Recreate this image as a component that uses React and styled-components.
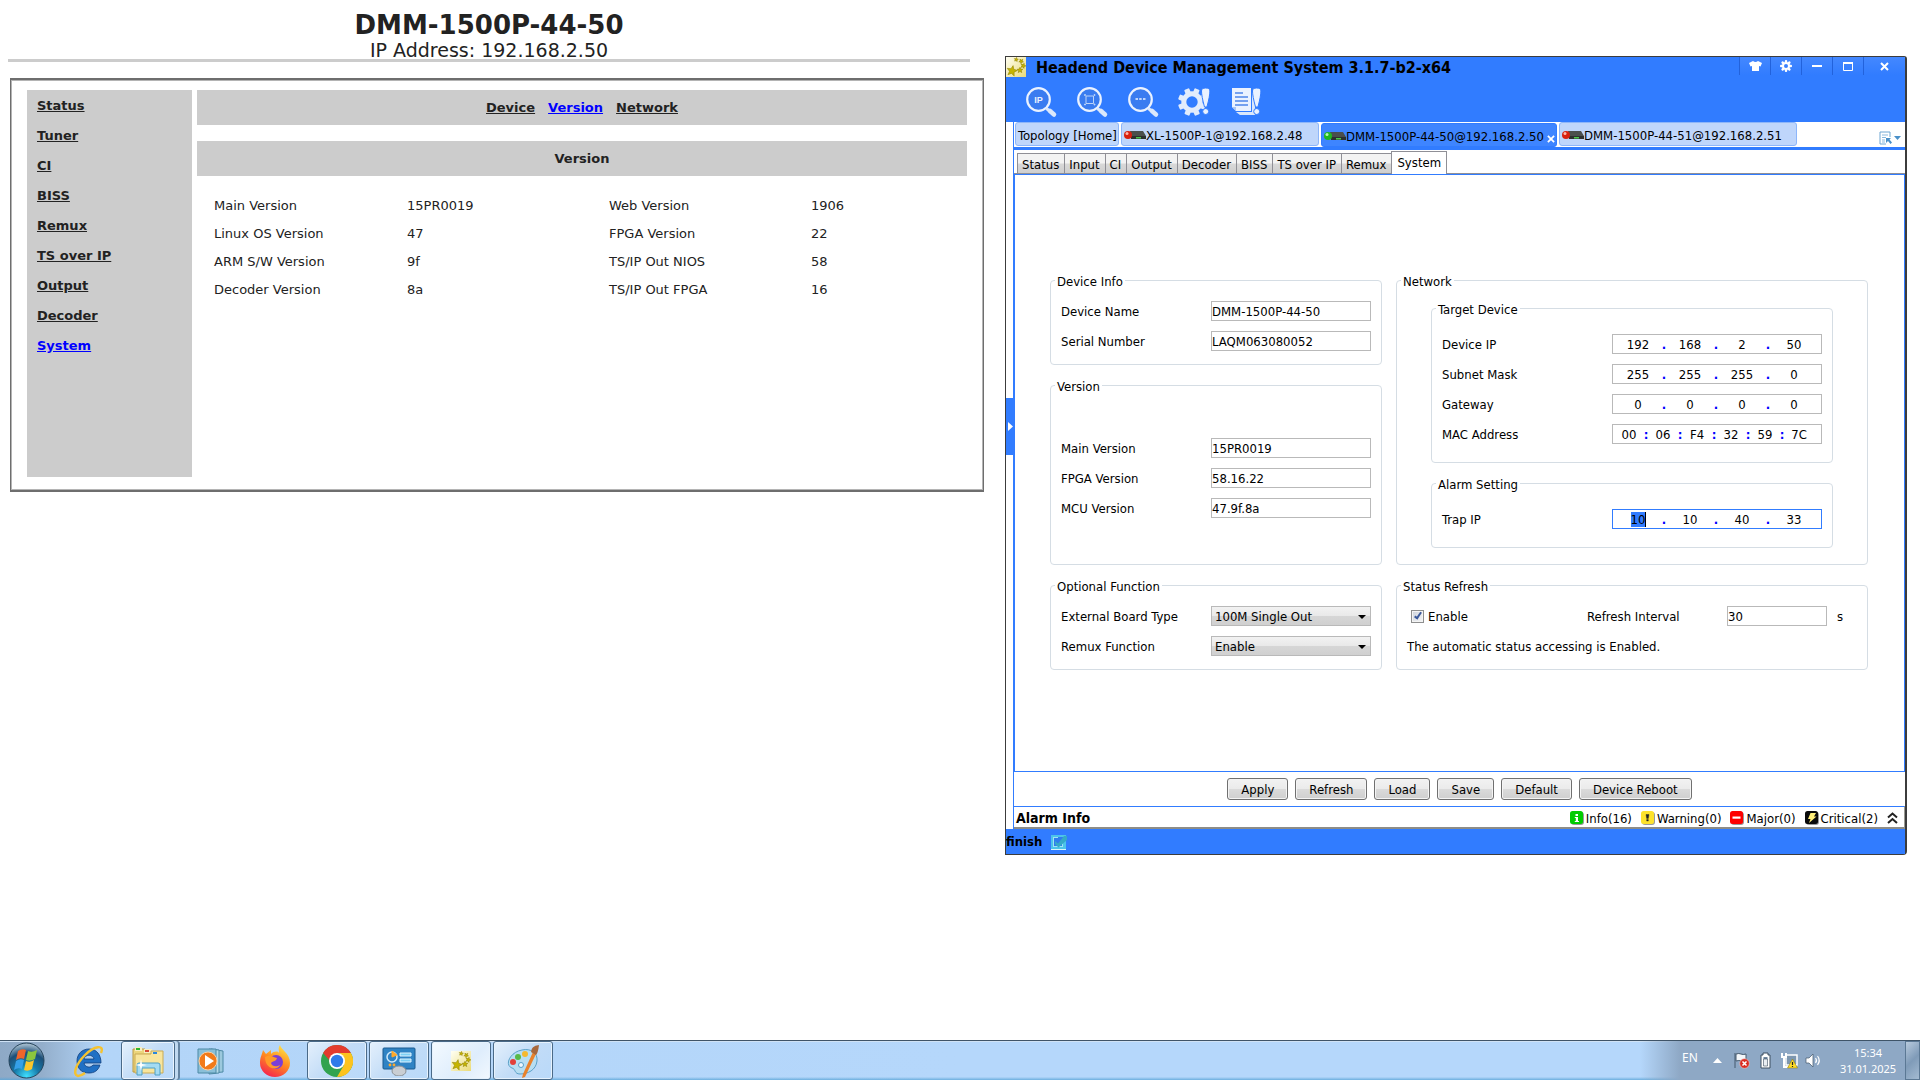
import React from "react";
import styled, { createGlobalStyle, css } from "styled-components";

const BLUE = "#317cff";
const UI = '"DejaVu Sans Condensed", "DejaVu Sans", sans-serif';

const Global = createGlobalStyle`
  *, *::before, *::after { box-sizing: border-box; }
  body { margin: 0; background: #fff; color: #000; }
  button, input, select { font: inherit; color: inherit; margin: 0; }
  button { cursor: pointer; }
  svg { display: block; flex: none; }
`;

const Desktop = styled.div`
  display: flex;
  flex-direction: column;
  min-height: 100vh;
  background: #fff;
`;

const Workspace = styled.main`
  flex: 1;
  display: grid;
  grid-template-columns: minmax(0, 1005fr) minmax(0, 902fr) minmax(0, 13fr);
  align-items: start;
`;

/* ---------- Device web page ---------- */

const WebPage = styled.section`
  font: 13px/18px "DejaVu Sans", Verdana, sans-serif;
  color: #222;
`;

const PageHeader = styled.header`
  margin: 0 35px 16px 8px;
  padding-top: 9px;
  border-bottom: 3px solid #ccc;
  text-align: center;
`;

const PageTitle = styled.h1`
  margin: 0;
  font-size: 26px;
  line-height: 32px;
`;

const PageAddress = styled.p`
  margin: 0;
  font-size: 19px;
  line-height: 18px;
`;

const PageFrame = styled.div`
  display: flex;
  gap: 5px;
  margin: 0 21px 0 10px;
  padding: 10px 16px 13px;
  border: 1px solid #6e6e6e;
  box-shadow: inset 0 0 0 1px #b4b4b4;
  border-bottom-width: 2px;
  border-top-width: 2px;
`;

const SideNav = styled.nav`
  display: flex;
  flex-direction: column;
  width: 165px;
  min-height: 387px;
  padding: 1px 10px;
  background: #ccc;
`;

const PageLink = styled.a`
  font-weight: bold;
  line-height: 30px;
  text-decoration: underline;
  color: ${(p) => (p.$current ? "#00f" : "#222")};
`;

const PageBody = styled.div`
  flex: 1;
  min-width: 0;
  display: flex;
  flex-direction: column;
  gap: 16px;
`;

const PageBar = styled.div`
  display: flex;
  align-items: center;
  justify-content: center;
  gap: 13px;
  height: 35px;
  background: #ccc;
`;

const BarHeading = styled.h2`
  margin: 0;
  font-size: 13px;
`;

const VersionTable = styled.table`
  width: 100%;
  table-layout: fixed;
  border-collapse: collapse;
  th, td {
    height: 28px;
    padding: 0 0 0 17px;
    text-align: left;
    font-weight: normal;
  }
  th:first-child { width: 193px; }
  th, td { width: 202px; }
  td:last-child { width: auto; }
`;

/* ---------- Management window ---------- */

const AppWindow = styled.section`
  margin-top: 56px;
  border: 1px solid #3c3c3c;
  border-right-width: 2px;
  border-radius: 0 3px 4px 0;
  background: #fff;
  font: 13px/17px ${UI};
`;

const WindowTop = styled.header`
  background: ${BLUE};
  height: 65px;
`;

const TitleBar = styled.div`
  display: flex;
  align-items: flex-start;
`;

const TitleText = styled.h2`
  flex: 1;
  margin: 0;
  padding-left: 10px;
  font-size: 16px;
  line-height: 22px;
  white-space: nowrap;
`;

const WindowButton = styled.button`
  display: flex;
  align-items: center;
  justify-content: center;
  width: ${(p) => (p.$wide ? "42px" : "31px")};
  height: 18px;
  padding: 0;
  border: 0;
  border-left: 1px solid #2262dc;
  background: linear-gradient(#4488ff, ${BLUE});
`;

const Toolbar = styled.div`
  display: flex;
  gap: 17px;
  padding: 6px 18px;
`;

const ToolButton = styled.button`
  width: 34px;
  height: 34px;
  padding: 0;
  border: 0;
  background: none;
`;

const DeviceTabs = styled.div`
  display: flex;
  align-items: flex-end;
  gap: 2px;
  height: 28px;
  margin-left: 7px;
  padding: 0 4px 0 1px;
  border-bottom: 3px solid ${BLUE};
  border-left: 1px solid ${BLUE};
`;

const DeviceTab = styled.button`
  display: flex;
  align-items: center;
  height: 24px;
  width: ${(p) => p.$w};
  margin-bottom: ${(p) => (p.$active ? 0 : "1px")};
  padding: 2px 1px 0 2px;
  border: 1px solid ${(p) => (p.$active ? BLUE : "#8db6fa")};
  border-radius: 3px;
  background: ${(p) => (p.$active ? "#3e85ff" : "#bfd6fb")};
  text-align: left;
  white-space: nowrap;
`;

const TabClose = styled.span`
  margin-left: auto;
  padding-top: 6px;
`;

const TabMenu = styled.button`
  margin: 0 0 2px auto;
  padding: 0;
  border: 0;
  background: none;
`;

const WindowBody = styled.div`
  display: flex;
`;

const Gutter = styled.div`
  display: flex;
  flex-direction: column;
  width: 7px;
  padding-top: 248px;
`;

const Expander = styled.button`
  display: flex;
  align-items: center;
  justify-content: flex-end;
  height: 57px;
  padding: 0;
  border: 0;
  background: ${BLUE};
`;

const WorkArea = styled.div`
  flex: 1;
  min-width: 0;
  border-left: 1px solid ${BLUE};
`;

const SubTabs = styled.div`
  display: flex;
  align-items: flex-end;
  height: 24px;
  padding-left: 3px;
  border-bottom: 1px solid #8f8f96;
`;

const SubTab = styled.button`
  height: ${(p) => (p.$active ? "23px" : "20px")};
  margin-bottom: ${(p) => (p.$active ? "-1px" : 0)};
  padding: ${(p) => (p.$active ? "0 5px 2px" : "2px 5px 0 4px")};
  border: 1px solid #8f8f96;
  border-right-width: ${(p) => (p.$last ? 0 : "1px")};
  border-left-width: ${(p) => (p.$active || p.$first ? "1px" : 0)};
  border-bottom: 0;
  background: ${(p) => (p.$active ? "#fff" : "linear-gradient(#f3f3f3 45%, #d8d8d8 55%, #cfcfcf)")};
  white-space: nowrap;
`;

const Panel = styled.div`
  display: flex;
  flex-direction: column;
  justify-content: center;
  min-height: 598px;
  padding: 0 36px 0 35px;
  border: 1px solid ${BLUE};
`;

const Groups = styled.form`
  display: grid;
  grid-template-columns: minmax(0, 332fr) minmax(0, 472fr);
  column-gap: 14px;
  row-gap: 12px;
  padding-bottom: 4px;
`;

const Column = styled.div`
  display: flex;
  flex-direction: column;
  gap: 12px;
`;

const Group = styled.fieldset`
  display: flex;
  flex-direction: column;
  gap: ${(p) => p.$gap || "10px"};
  min-width: 0;
  margin: 0;
  padding: ${(p) => p.$pad || "12px 10px 13px"};
  border: 1px solid #d5dde4;
  border-radius: 4px;
  legend {
    margin-left: ${(p) => (p.$nudge ? p.$nudge : "-6px")};
    padding: 0 2px;
    height: 17px;
    line-height: 19px;
  }
`;

const Row = styled.div`
  display: flex;
  align-items: center;
  height: 20px;
  white-space: nowrap;
`;

const RowLabel = styled.label`
  flex: 1;
`;

const boxed = css`
  height: 20px;
  border: 1px solid #b9b9b9;
  border-radius: 0;
  outline: 0;
  background: #fff;
`;

const TextBox = styled.input`
  ${boxed}
  width: ${(p) => p.$w || "160px"};
  padding: 0;
`;

const SelectBox = styled.span`
  position: relative;
  &::after {
    content: "";
    position: absolute;
    right: 5px;
    top: 9px;
    border: 4px solid transparent;
    border-top-color: #000;
    border-bottom: 0;
  }
`;

const Select = styled.select`
  ${boxed}
  display: block;
  appearance: none;
  width: 160px;
  padding: 0 0 0 3px;
  background: linear-gradient(#f2f2f2, #e9e9e9 48%, #d6d6d6 52%, #d0d0d0);
`;

const Octets = styled.div`
  ${boxed}
  display: flex;
  align-items: center;
  width: 210px;
  padding-left: 4px;
  border-color: ${(p) => (p.$focused ? BLUE : "#b9b9b9")};
`;

const Octet = styled.input`
  width: ${(p) => p.$w};
  height: 15px;
  padding: 0;
  border: 0;
  outline: 0;
  background: ${(p) => (p.$selected ? `linear-gradient(90deg, ${BLUE} 14px, #000 14px) center / 15px 15px no-repeat` : "transparent")};
  text-align: center;
`;

const Separator = styled.span`
  width: 10px;
  color: #00f;
  font-weight: bold;
  text-align: center;
`;

const CheckLabel = styled.label`
  display: flex;
  align-items: center;
  gap: 4px;
  width: 180px;
  padding-left: 4px;
`;

const CheckBox = styled.input`
  appearance: none;
  display: grid;
  place-items: center;
  width: 13px;
  height: 13px;
  border: 1px solid #8e8f8f;
  background: linear-gradient(135deg, #cdd3dc, #f6f6f6);
  box-shadow: inset 0 0 0 1px #f4f4f4;
  &:checked::after {
    content: "";
    width: 4px;
    height: 8px;
    margin-bottom: 2px;
    border: solid #3c5a9c;
    border-width: 0 2px 2px 0;
    rotate: 35deg;
  }
`;

const IntervalLabel = styled.label`
  width: 140px;
`;

const Unit = styled.span`
  margin-left: 10px;
`;

const Actions = styled.div`
  display: flex;
  justify-content: center;
  gap: 7px;
  padding: 6px 0;
`;

const ActionButton = styled.button`
  height: 22px;
  padding: 0 13px;
  border: 1px solid #707070;
  border-radius: 3px;
  background: linear-gradient(#f2f2f2, #ebebeb 48%, #dadada 52%, #cfcfcf);
  box-shadow: inset 0 0 0 1px #f4f4f4;
  white-space: nowrap;
`;

const AlarmBar = styled.div`
  display: flex;
  align-items: center;
  gap: 9px;
  height: 23px;
  padding: 2px 6px 0 2px;
  border-top: 1px solid ${BLUE};
  border-bottom: 2px solid #8c8c88;
  border-right: 1px solid #9a9a94;
`;

const AlarmTitle = styled.strong`
  flex: 1;
  font-size: 14px;
`;

const AlarmItem = styled.span`
  display: flex;
  align-items: center;
  gap: 2px;
`;

const ExpandAlarms = styled.button`
  padding: 0;
  border: 0;
  background: none;
`;

const StatusBar = styled.footer`
  display: flex;
  align-items: center;
  gap: 9px;
  height: 25px;
  background: ${BLUE};
  font-size: 13px;
  font-weight: bold;
`;

/* ---------- Taskbar ---------- */

const Taskbar = styled.footer`
  display: flex;
  align-items: stretch;
  height: 40px;
  border-top: 1px solid #3f5468;
  background:
    linear-gradient(transparent 92%, rgba(90, 165, 215, 0.8)),
    linear-gradient(90deg, #8ea9c6, #93aecb 42px, #b3d5f8 100px, #b5d7fb 50%, #b5d7fb);
  box-shadow: inset 0 1px 0 #cfe2f5;
`;

const StartButton = styled.button`
  width: 54px;
  padding: 0 0 0 8px;
  border: 0;
  background: none;
`;

const TaskButton = styled.button`
  display: flex;
  align-items: center;
  justify-content: center;
  width: ${(p) => p.$w || "60px"};
  padding: 0;
  margin-right: ${(p) => p.$after || "2px"};
  border: 1px solid ${(p) => (p.$open ? "#4a6a88" : "transparent")};
  border-radius: 3px;
  background: ${(p) =>
    p.$active
      ? "linear-gradient(135deg, #f4faff, #deedfc 60%, #f2f8fe)"
      : p.$open
        ? "linear-gradient(135deg, #e4f0fc, #c2dcf7 50%, #b9d9f9)"
        : "none"};
  box-shadow: ${(p) =>
    p.$stacked
      ? "inset 0 0 0 1px #eaf4fe, 3px 0 0 #c0d9f0, 5px 0 0 #6484a2"
      : p.$open
        ? "inset 0 0 0 1px #e6f2fd"
        : "none"};
`;

const Tray = styled.div`
  display: flex;
  align-items: center;
  margin-left: auto;
  padding-left: 42px;
  background: linear-gradient(90deg, rgba(142, 168, 197, 0), #8ea8c5 40px, #8ea8c5);
  color: #fff;
  font: 11px/16px "Noto Sans", "Open Sans", sans-serif;
`;

const Language = styled.span`
  width: 31px;
  padding-bottom: 6px;
  font-size: 12px;
`;

const TrayIcons = styled.div`
  display: flex;
  align-items: center;
  gap: 7px;
`;

const ShowHidden = styled.button`
  padding: 0 4px 0 0;
  border: 0;
  background: none;
`;

const Clock = styled.time`
  width: 74px;
  margin-left: 9px;
  text-align: center;
`;

const ShowDesktop = styled.button`
  align-self: stretch;
  width: 15px;
  border: 1px solid #5b7894;
  background: linear-gradient(135deg, #b8cadd, #7f9bb8 50%, #a4bbd2);
`;

/* ---------- Icons ---------- */

const starPath = (cx, cy, r, turn) =>
  "M" +
  Array.from({ length: 10 }, (_, i) => {
    const radius = i % 2 ? r * 0.45 : r;
    const angle = ((i * 36 + turn) * Math.PI) / 180;
    return `${(cx + radius * Math.sin(angle)).toFixed(1)} ${(cy - radius * Math.cos(angle)).toFixed(1)}`;
  }).join("L") +
  "Z";

const logoStars = [
  [6, 14, 5.5, 12],
  [14, 13.2, 3, 0],
  [17.2, 8.8, 2.7, 20],
  [15.2, 4.2, 2.5, 40],
  [10.2, 2.6, 2.2, 10],
];

const StarLogo = ({ size = 20 }) => (
  <svg width={size} height={size} viewBox="0 0 20 20">
    <defs>
      <linearGradient id="starBg" x1="0" y1="0" x2="1" y2="1">
        <stop offset="0" stopColor="#fffff4" />
        <stop offset="1" stopColor="#eadb78" />
      </linearGradient>
    </defs>
    <rect width="20" height="20" fill="url(#starBg)" />
    {logoStars.map(([x, y, r, t]) => (
      <path key={x} d={starPath(x, y, r, t)} fill="#c6b400" stroke="#8a7c00" strokeWidth=".5" />
    ))}
  </svg>
);

const Magnifier = ({ children }) => (
  <svg width="34" height="34" viewBox="0 0 34 34">
    <path d="M22.500 23.500l3 2.500" stroke="#dbe8fb" strokeWidth="3" />
    <path d="M26 26l4 3.500" stroke="#dbe8fb" strokeWidth="4.500" strokeLinecap="round" />
    <circle cx="14.500" cy="14.500" r="11.300" fill="#3a7cf0" stroke="#eaf2ff" strokeWidth="2.200" />
    {children}
  </svg>
);

const IpSearch = () => (
  <Magnifier>
    <text x="14.500" y="18" fontSize="9" fontWeight="bold" fontFamily="Liberation Sans, sans-serif" textAnchor="middle" fill="#eaf2ff">IP</text>
  </Magnifier>
);

const FrameSearch = () => (
  <Magnifier>
    <path d="M11 11h7.500v7.500H11z" fill="none" stroke="#bcd3f8" />
    <path d="M9.500 9.500h1v1h-1zM19 9.500h1v1h-1zM9.500 19h1v1h-1zM19 19h1v1h-1z" fill="#bcd3f8" stroke="#bcd3f8" strokeWidth=".8" />
  </Magnifier>
);

const DotSearch = () => (
  <Magnifier>
    <path d="M9.500 14h2.500M13.200 14h2.500M17 14h2.500" stroke="#eaf2ff" strokeWidth="1.300" />
  </Magnifier>
);

const Teeth = ({ cx, cy, r, w, h, fill }) => (
  <g fill={fill}>
    {[0, 45, 90, 135, 180, 225, 270, 315].map((a) => (
      <rect key={a} x={cx - w / 2} y={cy - r} width={w} height={h} rx="1" transform={`rotate(${a} ${cx} ${cy})`} />
    ))}
  </g>
);

const Exclaim = () => (
  <g fill="#eaf2ff" stroke={BLUE}>
    <path d="M24.500 6q0-3 4.200-3t4.200 3q0 5-3 16h-2.400q-3-11-3-16z" />
    <circle cx="28.700" cy="26.500" r="3" />
  </g>
);

const GearAlert = () => (
  <svg width="34" height="34" viewBox="0 0 34 34">
    <g transform="rotate(22 15 17)">
      <Teeth cx={15} cy={17} r={14} w={5.4} h={7} fill="#e2ecfc" />
    </g>
    <circle cx="15" cy="17" r="8.200" fill={BLUE} stroke="#e2ecfc" strokeWidth="5" />
    <Exclaim />
  </svg>
);

const ReportAlert = () => (
  <svg width="34" height="34" viewBox="0 0 34 34">
    <path d="M24 6h3v24H12l-4-3h16z" fill="#dbe8fb" />
    <path d="M4 3h19v23H8l-4-4z" fill="#eaf2ff" />
    <path d="M7 8h8M7 12h13M7 16h13M7 20h13" stroke="#4f86ea" strokeWidth="1.400" />
    <path d="M4 22h4v4z" fill="#a9c6f5" />
    <Exclaim />
  </svg>
);

const ShirtIcon = () => (
  <svg width="13" height="12" viewBox="0 0 13 12">
    <path d="M4 1q2.500 2 5 0l4 2-1.500 3.500L10 6v5H3V6l-1.500.5L0 3z" fill="#fff" />
  </svg>
);

const GearIcon = () => (
  <svg width="12" height="12" viewBox="0 0 12 12">
    <Teeth cx={6} cy={6} r={6} w={2.4} h={3} fill="#fff" />
    <circle cx="6" cy="6" r="3" fill="none" stroke="#fff" strokeWidth="2" />
  </svg>
);

const MinIcon = () => (
  <svg width="10" height="10" viewBox="0 0 10 10"><path d="M0 5h10" stroke="#fff" strokeWidth="2" /></svg>
);

const MaxIcon = () => (
  <svg width="10" height="9" viewBox="0 0 10 9"><path d="M.5 1h9v7.500h-9z" fill="none" stroke="#fff" /><path d="M0 1h10" stroke="#fff" strokeWidth="2" /></svg>
);

const CrossIcon = ({ size = 9 }) => (
  <svg width={size} height={size} viewBox="0 0 9 9"><path d="M1 1l7 7M8 1L1 8" stroke="#fff" strokeWidth="2" /></svg>
);

const DeviceIcon = ({ online }) => (
  <svg width="22" height="12" viewBox="1 0 22 12">
    <path d="M7 2h13l3 5v3H8z" fill="#4a4f4c" />
    <path d="M8 7h15v3H8z" fill="#2c302e" />
    <path d="M13 8h5v1.500h-5z" fill="#4cc94c" />
    <circle cx="5" cy="6" r="4" fill={online ? "#1fb81f" : "#d8200f"} />
    <circle cx="4" cy="4.400" r="1.500" fill={online ? "#b6f7b0" : "#ffb5a8"} />
  </svg>
);

const TabListIcon = () => (
  <svg width="22" height="14" viewBox="0 0 22 14">
    <path d="M11 6V1H1v12h6" fill="none" stroke="#6ea6d2" />
    <path d="M3 4h6M3 6.500h4M3 9h3M3 11h3" stroke="#8ab9de" />
    <path d="M7 7h5l-1.500 1.500L13 11.500 11.500 13 9 10l-2 2z" fill="#4a90c8" />
    <path d="M15 5h7l-3.500 4z" fill="#4a90c8" />
  </svg>
);

const alarmShapes = {
  info: ["#0c0", <path key="p" d="M5.500 3h2.500v2H5.500zM4.800 6H8v4h1v1H4.800v-1h1V7h-1z" fill="#fff" />],
  warning: ["#fde22c", <path key="p" d="M5 3.500h3L7.300 7.500H5.700zM5.700 8.500h1.600V10H5.700z" fill="#222" stroke="#222" strokeWidth=".4" />],
  major: ["#fe0000", <path key="p" d="M2.500 5.500h8v2.200h-8z" fill="#fff" />],
  critical: ["#0a0a0a", <path key="p" d="M5.500 2H11L9 5.500h2.500L4 12l1.500-4H3z" fill="#ffee7a" />],
};

const AlarmIcon = ({ kind }) => (
  <svg width="14" height="14" viewBox="0 0 14 14">
    <rect x="1" y="1" width="13" height="13" rx="3" fill="#9a9a9a" />
    <rect width="13" height="13" rx="2.500" fill={alarmShapes[kind][0]} />
    {alarmShapes[kind][1]}
  </svg>
);

const ChevronsUp = () => (
  <svg width="11" height="12" viewBox="0 0 11 12">
    <path d="M1 5.500l4.500-4 4.500 4M1 11l4.500-4 4.500 4" fill="none" stroke="#222" strokeWidth="2" />
  </svg>
);

const FinishIcon = () => (
  <svg width="16" height="16" viewBox="0 0 16 16">
    <rect y="1" width="15" height="15" fill="#4cc3ea" />
    <path d="M2 3h10v10H2z" fill="#2f7bf0" />
    <path d="M2 3h5v1H3v8h8V8h1v5H2z" fill="#9fe3f6" />
    <path d="M4 7l3 2.500 6-7.500h3v4l-8.500 7.500L4 10z" fill="#35a9c9" />
    <path d="M0 15h15v1H0z" fill="#d8f4fb" />
  </svg>
);

const StartOrb = () => (
  <svg width="37" height="37" viewBox="0 0 37 37">
    <defs>
      <radialGradient id="orb" cx=".5" cy=".95" r=".9">
        <stop offset="0" stopColor="#3fe0ff" />
        <stop offset=".4" stopColor="#1679a8" />
        <stop offset=".75" stopColor="#1d4f78" />
        <stop offset="1" stopColor="#9cb6c9" />
      </radialGradient>
    </defs>
    <circle cx="18.500" cy="18.500" r="17.500" fill="url(#orb)" stroke="#27455c" />
    <path d="M10 9q4-3 8-1l-2 9q-4-2-8 1z" fill="#f0652a" />
    <path d="M20 9q4 2 9-1l-2 9q-5 3-9 1z" fill="#8cc63e" />
    <path d="M8 19q4-3 8-1l-2 9q-4-2-8 1z" fill="#35a0e8" />
    <path d="M18 19q4 2 8-1l-2 9q-4 3-8 1z" fill="#fcc62a" />
  </svg>
);

const IeIcon = () => (
  <svg width="34" height="34" viewBox="0 0 34 34">
    <path fillRule="evenodd" d="M19 5c8 0 12 6 12 14H14c1 5 7 5 9 2h7c-2 6-6 8-11 8-8 0-12-5-12-12S12 5 19 5zm-5 10h10c-1-5-9-5-10 0z" fill="#2070c4" stroke="#123f7c" strokeWidth=".8" />
    <path d="M31 9c4-9-7-7-16 2S2 31 8 32q3 0 7-3" fill="none" stroke="#f5c22f" strokeWidth="2.400" />
  </svg>
);

const ExplorerIcon = () => (
  <svg width="34" height="32" viewBox="0 0 34 32">
    <path d="M2 4h12l2 3h14v20H2z" fill="#ecd57c" stroke="#b99a45" />
    <path d="M4 2h7v4H4z" fill="#f8eec2" /><path d="M5 3h4v2H5z" fill="#2db52d" />
    <path d="M13 4h8v4h-8z" fill="#f8eec2" /><path d="M14 5h4v2h-4z" fill="#d74a35" />
    <path d="M20 6h12v22H4V9h16z" fill="#f8e59c" stroke="#c9aa54" />
    <path d="M22 7h4v2h-4z" fill="#2a87dd" />
    <path d="M6 30V20q0-2 2-2h19q2 0 2 2v10h-5v-7H11v7z" fill="#a4dbf2" stroke="#4e9fc4" />
    <path d="M10 14l1 5 5 1-5 1-1 5-1-5-5-1 5-1z" fill="#fff" />
  </svg>
);

const MediaIcon = () => (
  <svg width="30" height="28" viewBox="0 0 30 28">
    <path d="M14 2l12 2v21l-12 1z" fill="#9cc9dd" stroke="#4d89a5" />
    <path d="M12 2l10 1v23l-10 1z" fill="#b5dbe9" stroke="#4d89a5" />
    <path d="M1 2h18v24H1z" fill="#8abfd8" stroke="#4d89a5" />
    <circle cx="11" cy="14" r="9" fill="#f27a1a" stroke="#fbd0a4" />
    <path d="M8 8l9 6-9 6z" fill="#fff" />
  </svg>
);

const FirefoxIcon = () => (
  <svg width="32" height="32" viewBox="0 0 32 32">
    <defs>
      <linearGradient id="fox" x1=".8" y1="0" x2=".3" y2="1">
        <stop offset="0" stopColor="#ffe94a" />
        <stop offset=".5" stopColor="#ff8a1f" />
        <stop offset="1" stopColor="#f5234f" />
      </linearGradient>
    </defs>
    <path d="M21 0c1 5 10 8 10 18a15 14 0 0 1-30 0C1 12 3 10 4 5l3 4 5-4v4c3-3 7-3 8-1 0-4-1-5 1-8z" fill="url(#fox)" />
    <circle cx="17" cy="17" r="7" fill="#7a3fd6" />
    <path d="M6 12c5-3 8 0 12 1-1 4-5 3-6 5 1 4 6 4 9 2-2 6-15 5-15-8z" fill="#ff9a28" />
  </svg>
);

const ChromeIcon = () => (
  <svg width="32" height="32" viewBox="0 0 32 32">
    <circle cx="16" cy="16" r="16" fill="#32a350" />
    <path d="M2.140 8A16 16 0 0 1 29.860 8H16v8H9.100z" fill="#e33b2e" />
    <path d="M29.860 8A16 16 0 0 1 16 32l7-12-4-12z" fill="#fcc31e" />
    <circle cx="16" cy="16" r="8" fill="#fff" />
    <circle cx="16" cy="16" r="6.200" fill="#2f7bea" />
  </svg>
);

const ControlPanelIcon = () => (
  <svg width="34" height="30" viewBox="0 0 34 30">
    <rect x="1" y="2" width="32" height="21" rx="1" fill="#2f83c4" stroke="#1b5a90" />
    <circle cx="10" cy="11" r="5" fill="none" stroke="#cfe9fb" strokeWidth="1.500" />
    <path d="M10 11V5l5 4z" fill="#ffa92b" stroke="#ffa92b" />
    <path d="M18 7h11v3H18zM18 13h11v3H18z" fill="#7fd0f5" stroke="#e0f3fe" />
    <circle cx="8" cy="19" r="1.400" fill="#ffa92b" /><circle cx="12" cy="19" r="1.400" fill="#ffa92b" />
    <ellipse cx="17" cy="25" rx="7" ry="5" fill="#c9ced3" stroke="#8b9196" />
  </svg>
);

const PaintIcon = () => (
  <svg width="34" height="34" viewBox="0 0 34 34">
    <path d="M16 6c9-2 16 3 15 11-1 9-9 13-17 13-6 0-4-5-8-6C-2 21 4 8 16 6z" fill="#b7def2" stroke="#5aa0c8" />
    <circle cx="7" cy="18" r="3" fill="#e2403a" /><circle cx="12" cy="13" r="3" fill="#58b947" />
    <circle cx="19" cy="10" r="3" fill="#f5b92e" /><circle cx="15" cy="21" r="2.500" fill="#eef8fd" stroke="#5aa0c8" />
    <path d="M27 8l3 2-11 23-3 1 1-4z" fill="#e8822c" />
    <path d="M25 8q0-6 8-7-1 8-3 10z" fill="#a8683c" />
  </svg>
);

const ArrowIcon = () => <svg width="9" height="5" viewBox="0 0 9 5"><path d="M4.500 0L9 5H0z" fill="#fff" /></svg>;

const FlagIcon = () => (
  <svg width="17" height="17" viewBox="0 0 17 17">
    <path d="M2 1v15M3 2q3-1 5 0t5 0v7q-3 1-5 0t-5 0z" fill="#f4f7fa" stroke="#44586c" />
    <circle cx="11.500" cy="11.500" r="4.800" fill="#d92a20" stroke="#f6c6c2" strokeWidth=".6" />
    <path d="M9.500 9.500l4 4M13.500 9.500l-4 4" stroke="#fff" strokeWidth="1.500" />
  </svg>
);

const BatteryIcon = () => (
  <svg width="17" height="17" viewBox="0 0 17 17">
    <path d="M6 3V1h5v2h2v13H4V3z" fill="#fff" stroke="#3c4e60" />
    <path d="M6.500 5h4v2h-4z" fill="#6f879f" /><path d="M6.500 7h4v7h-4z" fill="#e9eef3" stroke="#3c4e60" strokeWidth=".6" />
  </svg>
);

const NetworkIcon = () => (
  <svg width="17" height="17" viewBox="0 0 17 17">
    <path d="M5 3h11v10H5z" fill="#7d97b0" stroke="#fff" strokeWidth="1.500" />
    <path d="M1 1v4h4V1M3 5v10h4" fill="none" stroke="#fff" strokeWidth="2" />
    <path d="M11.500 7l5 9h-10z" fill="#ffdc28" stroke="#8a7400" strokeWidth=".5" />
    <path d="M11.500 10v3M11.500 14v1" stroke="#222" strokeWidth="1.200" />
  </svg>
);

const SoundIcon = () => (
  <svg width="17" height="17" viewBox="0 0 17 17">
    <path d="M1 6h3l4-4v13l-4-4H1z" fill="#fff" stroke="#44586c" strokeWidth=".7" />
    <path d="M10.500 6q2 2.500 0 5M12.500 4q3.500 4.500 0 9" fill="none" stroke="#fff" strokeWidth="1.200" />
  </svg>
);

/* ---------- Data ---------- */

const sideLinks = ["Status", "Tuner", "CI", "BISS", "Remux", "TS over IP", "Output", "Decoder", "System"];
const pageLinks = ["Device", "Version", "Network"];
const versions = [
  ["Main Version", "15PR0019", "Web Version", "1906"],
  ["Linux OS Version", "47", "FPGA Version", "22"],
  ["ARM S/W Version", "9f", "TS/IP Out NIOS", "58"],
  ["Decoder Version", "8a", "TS/IP Out FPGA", "16"],
];
const subTabs = ["Status", "Input", "CI", "Output", "Decoder", "BISS", "TS over IP", "Remux", "System"];
const actions = ["Apply", "Refresh", "Load", "Save", "Default", "Device Reboot"];
const alarms = [
  ["info", "Info(16)"],
  ["warning", "Warning(0)"],
  ["major", "Major(0)"],
  ["critical", "Critical(2)"],
];
const tools = [
  ["Search by IP", IpSearch],
  ["Search by range", FrameSearch],
  ["Search", DotSearch],
  ["Settings", GearAlert],
  ["Report", ReportAlert],
];

/* ---------- Form parts ---------- */

const toId = (label) => label.toLowerCase().replace(/ /g, "-");

const Field = ({ label, value }) => (
  <Row>
    <RowLabel htmlFor={toId(label)}>{label}</RowLabel>
    <TextBox id={toId(label)} defaultValue={value} />
  </Row>
);

const Choice = ({ label, value }) => (
  <Row>
    <RowLabel htmlFor={toId(label)}>{label}</RowLabel>
    <SelectBox>
      <Select id={toId(label)} defaultValue={value}>
        <option>{value}</option>
      </Select>
    </SelectBox>
  </Row>
);

const AddressField = ({ label, parts, separator = ".", width = "42px", focused }) => (
  <Row>
    <RowLabel htmlFor={toId(label)}>{label}</RowLabel>
    <Octets $focused={focused}>
      {parts.map((part, i) => (
        <React.Fragment key={i}>
          {i > 0 && <Separator>{separator}</Separator>}
          <Octet
            id={i === 0 ? toId(label) : undefined}
            aria-label={`${label} part ${i + 1}`}
            defaultValue={part}
            $w={width}
            $selected={focused && i === 0}
          />
        </React.Fragment>
      ))}
    </Octets>
  </Row>
);

/* ---------- Sections ---------- */

const DevicePage = () => (
  <WebPage>
    <PageHeader>
      <PageTitle>DMM-1500P-44-50</PageTitle>
      <PageAddress>IP Address: 192.168.2.50</PageAddress>
    </PageHeader>
    <PageFrame>
      <SideNav>
        {sideLinks.map((l) => (
          <span key={l}><PageLink href="#" $current={l === "System"}>{l}</PageLink></span>
        ))}
      </SideNav>
      <PageBody>
        <PageBar as="nav">
          {pageLinks.map((l) => (
            <PageLink key={l} href="#" $current={l === "Version"}>{l}</PageLink>
          ))}
        </PageBar>
        <PageBar>
          <BarHeading>Version</BarHeading>
        </PageBar>
        <VersionTable>
          <tbody>
            {versions.map(([a, b, c, d]) => (
              <tr key={a}>
                <th scope="row">{a}</th>
                <td>{b}</td>
                <th scope="row">{c}</th>
                <td>{d}</td>
              </tr>
            ))}
          </tbody>
        </VersionTable>
      </PageBody>
    </PageFrame>
  </WebPage>
);

const SystemForm = () => (
  <Groups>
    <Column>
      <Group>
        <legend>Device Info</legend>
        <Field label="Device Name" value="DMM-1500P-44-50" />
        <Field label="Serial Number" value="LAQM063080052" />
      </Group>
      <Group $pad="44px 10px 46px">
        <legend>Version</legend>
        <Field label="Main Version" value="15PR0019" />
        <Field label="FPGA Version" value="58.16.22" />
        <Field label="MCU Version" value="47.9f.8a" />
      </Group>
    </Column>
    <Group $gap="12px" $pad="11px 34px 16px" $nudge="-30px">
      <legend>Network</legend>
      <Group $pad="17px 10px 18px">
        <legend>Target Device</legend>
        <AddressField label="Device IP" parts={["192", "168", "2", "50"]} />
        <AddressField label="Subnet Mask" parts={["255", "255", "255", "0"]} />
        <AddressField label="Gateway" parts={["0", "0", "0", "0"]} />
        <AddressField label="MAC Address" parts={["00", "06", "F4", "32", "59", "7C"]} separator=":" width="24px" />
      </Group>
      <Group $pad="17px 10px 18px">
        <legend>Alarm Setting</legend>
        <AddressField label="Trap IP" parts={["10", "10", "40", "33"]} focused />
      </Group>
    </Group>
    <Group>
      <legend>Optional Function</legend>
      <Choice label="External Board Type" value="100M Single Out" />
      <Choice label="Remux Function" value="Enable" />
    </Group>
    <Group>
      <legend>Status Refresh</legend>
      <Row>
        <CheckLabel>
          <CheckBox type="checkbox" defaultChecked />
          Enable
        </CheckLabel>
        <IntervalLabel htmlFor="interval">Refresh Interval</IntervalLabel>
        <TextBox id="interval" defaultValue="30" $w="100px" />
        <Unit>s</Unit>
      </Row>
      <Row>The automatic status accessing is Enabled.</Row>
    </Group>
  </Groups>
);

const ManagementWindow = () => (
  <AppWindow>
    <WindowTop>
      <TitleBar>
        <StarLogo />
        <TitleText>Headend Device Management System 3.1.7-b2-x64</TitleText>
        <WindowButton aria-label="Theme"><ShirtIcon /></WindowButton>
        <WindowButton aria-label="Settings"><GearIcon /></WindowButton>
        <WindowButton aria-label="Minimize"><MinIcon /></WindowButton>
        <WindowButton aria-label="Maximize"><MaxIcon /></WindowButton>
        <WindowButton aria-label="Close" $wide><CrossIcon /></WindowButton>
      </TitleBar>
      <Toolbar>
        {tools.map(([name, Icon]) => (
          <ToolButton key={name} aria-label={name}><Icon /></ToolButton>
        ))}
      </Toolbar>
    </WindowTop>
    <DeviceTabs role="tablist">
      <DeviceTab role="tab" $w="104px">Topology [Home]</DeviceTab>
      <DeviceTab role="tab" $w="198px"><DeviceIcon />XL-1500P-1@192.168.2.48</DeviceTab>
      <DeviceTab role="tab" $w="236px" $active>
        <DeviceIcon online />DMM-1500P-44-50@192.168.2.50
        <TabClose><CrossIcon size={8} /></TabClose>
      </DeviceTab>
      <DeviceTab role="tab" $w="238px"><DeviceIcon />DMM-1500P-44-51@192.168.2.51</DeviceTab>
      <TabMenu aria-label="Open tabs"><TabListIcon /></TabMenu>
    </DeviceTabs>
    <WindowBody>
      <Gutter>
        <Expander aria-label="Expand device list">
          <svg width="5" height="9" viewBox="0 0 5 9"><path d="M0 0l5 4.500L0 9z" fill="#fff" /></svg>
        </Expander>
      </Gutter>
      <WorkArea>
        <SubTabs role="tablist">
          {subTabs.map((t, i) => (
            <SubTab key={t} role="tab" $first={i === 0} $last={t === "Remux"} $active={t === "System"}>{t}</SubTab>
          ))}
        </SubTabs>
        <Panel>
          <SystemForm />
        </Panel>
        <Actions>
          {actions.map((a) => <ActionButton key={a}>{a}</ActionButton>)}
        </Actions>
        <AlarmBar>
          <AlarmTitle>Alarm Info</AlarmTitle>
          {alarms.map(([kind, text]) => (
            <AlarmItem key={kind}><AlarmIcon kind={kind} />{text}</AlarmItem>
          ))}
          <ExpandAlarms aria-label="Show alarms"><ChevronsUp /></ExpandAlarms>
        </AlarmBar>
      </WorkArea>
    </WindowBody>
    <StatusBar>finish <FinishIcon /></StatusBar>
  </AppWindow>
);

export default function App() {
  return (
    <Desktop>
      <Global />
      <Workspace>
        <DevicePage />
        <ManagementWindow />
      </Workspace>
      <Taskbar>
        <StartButton aria-label="Start"><StartOrb /></StartButton>
        <TaskButton aria-label="Internet Explorer" $w="66px" $after="1px"><IeIcon /></TaskButton>
        <TaskButton aria-label="File Explorer" $w="54px" $after="6px" $open $stacked><ExplorerIcon /></TaskButton>
        <TaskButton aria-label="Media Player" $w="62px"><MediaIcon /></TaskButton>
        <TaskButton aria-label="Firefox"><FirefoxIcon /></TaskButton>
        <TaskButton aria-label="Chrome" $open><ChromeIcon /></TaskButton>
        <TaskButton aria-label="Control Panel" $open><ControlPanelIcon /></TaskButton>
        <TaskButton aria-label="Device Management" $open $active><StarLogo /></TaskButton>
        <TaskButton aria-label="Paint" $open><PaintIcon /></TaskButton>
        <Tray>
          <Language>EN</Language>
          <TrayIcons>
            <ShowHidden aria-label="Show hidden icons"><ArrowIcon /></ShowHidden>
            <FlagIcon />
            <BatteryIcon />
            <NetworkIcon />
            <SoundIcon />
          </TrayIcons>
          <Clock>15:34<br />31.01.2025</Clock>
          <ShowDesktop aria-label="Show desktop" />
        </Tray>
      </Taskbar>
    </Desktop>
  );
}
